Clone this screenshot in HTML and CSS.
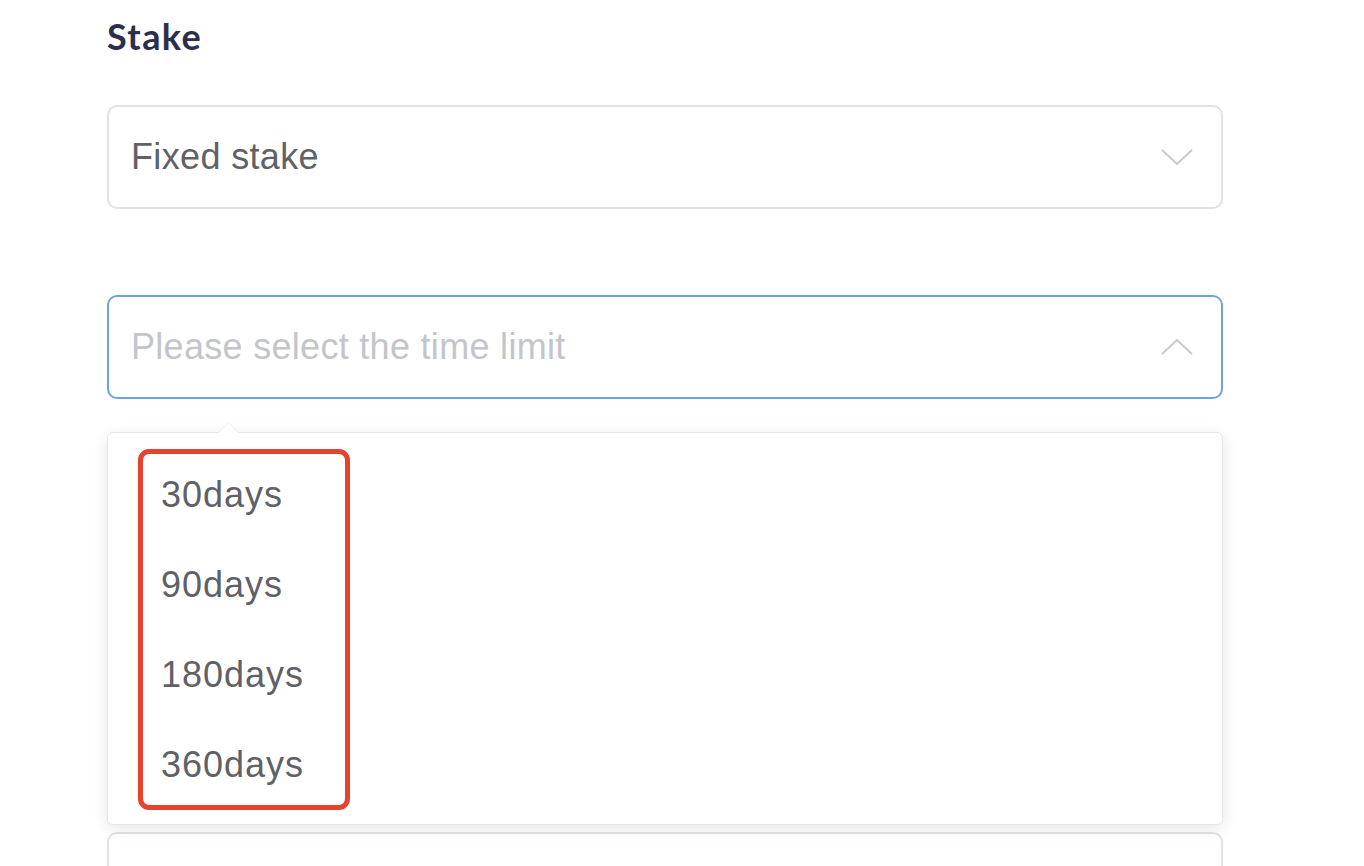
FILE: index.html
```html
<!DOCTYPE html>
<html lang="en">
<head>
<meta charset="utf-8">
<title>Stake</title>
<link rel="stylesheet" href="styles.css">
</head>
<body>
<div class="page">
  <h2 class="title">Stake</h2>
  <div class="select">
    <span class="value">Fixed stake</span>
    <svg class="chev" width="32" height="18" viewBox="0 0 32 18"><path d="M1 2 L16 16 L31 2" fill="none" stroke="#c6c9cf" stroke-width="2"/></svg>
  </div>
  <div class="select focused">
    <span class="placeholder">Please select the time limit</span>
    <svg class="chev" width="32" height="18" viewBox="0 0 32 18"><path d="M1 16 L16 2 L31 16" fill="none" stroke="#c6c9cf" stroke-width="2"/></svg>
  </div>
  <div class="dropdown">
    <span class="arrow"></span>
    <ul class="options">
      <li>30days</li>
      <li>90days</li>
      <li>180days</li>
      <li>360days</li>
    </ul>
    <span class="highlight"></span>
  </div>
  <div class="select next"></div>
</div>
</body>
</html>
```

FILE: styles.css
```css
* { box-sizing: border-box; }
html, body { margin: 0; padding: 0; background: #fff; }
body { font-family: "Liberation Sans", Arial, sans-serif; overflow: hidden; height: 866px; }
.page { padding: 0 141px 0 107px; width: 1364px; height: 866px; overflow: hidden; }
.title {
  margin: 0; padding-top: 13px; height: 105px;
  font-family: Lato, "Open Sans", sans-serif; font-weight: 700;
  font-size: 36px; line-height: 46px; color: #2b2f4d; letter-spacing: 1.4px;
}
.select {
  height: 104px; border: 2px solid #e0e2e6; border-radius: 10px;
  display: flex; align-items: center; justify-content: space-between;
  padding: 0 28px 0 22px; background: #fff;
  font-size: 36px; letter-spacing: 0.35px;
}
.select + .select { margin-top: 86px; }
.select.focused { border-color: #6ea3e3; }
.value { color: #606266; }
.placeholder { color: #c3c5ca; letter-spacing: 0.3px; }
.chev { display: block; }
.dropdown {
  position: relative; margin-top: 33px; height: 393px;
  border: 1px solid #e6e7ea; border-radius: 6px; background: #fff;
  box-shadow: 0 4px 16px rgba(0,0,0,0.1);
  padding: 17px 0 16px;
}
.arrow {
  position: absolute; left: 113px; top: -8px; width: 15px; height: 15px;
  background: #fff; border-left: 1px solid #eceef1; border-top: 1px solid #eceef1;
  transform: rotate(45deg);
}
.options { list-style: none; margin: 0; padding: 0; }
.options li {
  height: 90px; display: flex; align-items: center;
  padding-left: 53px; font-size: 36px; color: #5f6166; letter-spacing: 1px;
}
.highlight {
  position: absolute; left: 30px; top: 16px; width: 212px; height: 361px;
  border: 5px solid #e6432c; border-radius: 11px;
}
.select.next { margin-top: 7px; height: 40px; border-bottom: none; border-radius: 10px 10px 0 0; }
```
